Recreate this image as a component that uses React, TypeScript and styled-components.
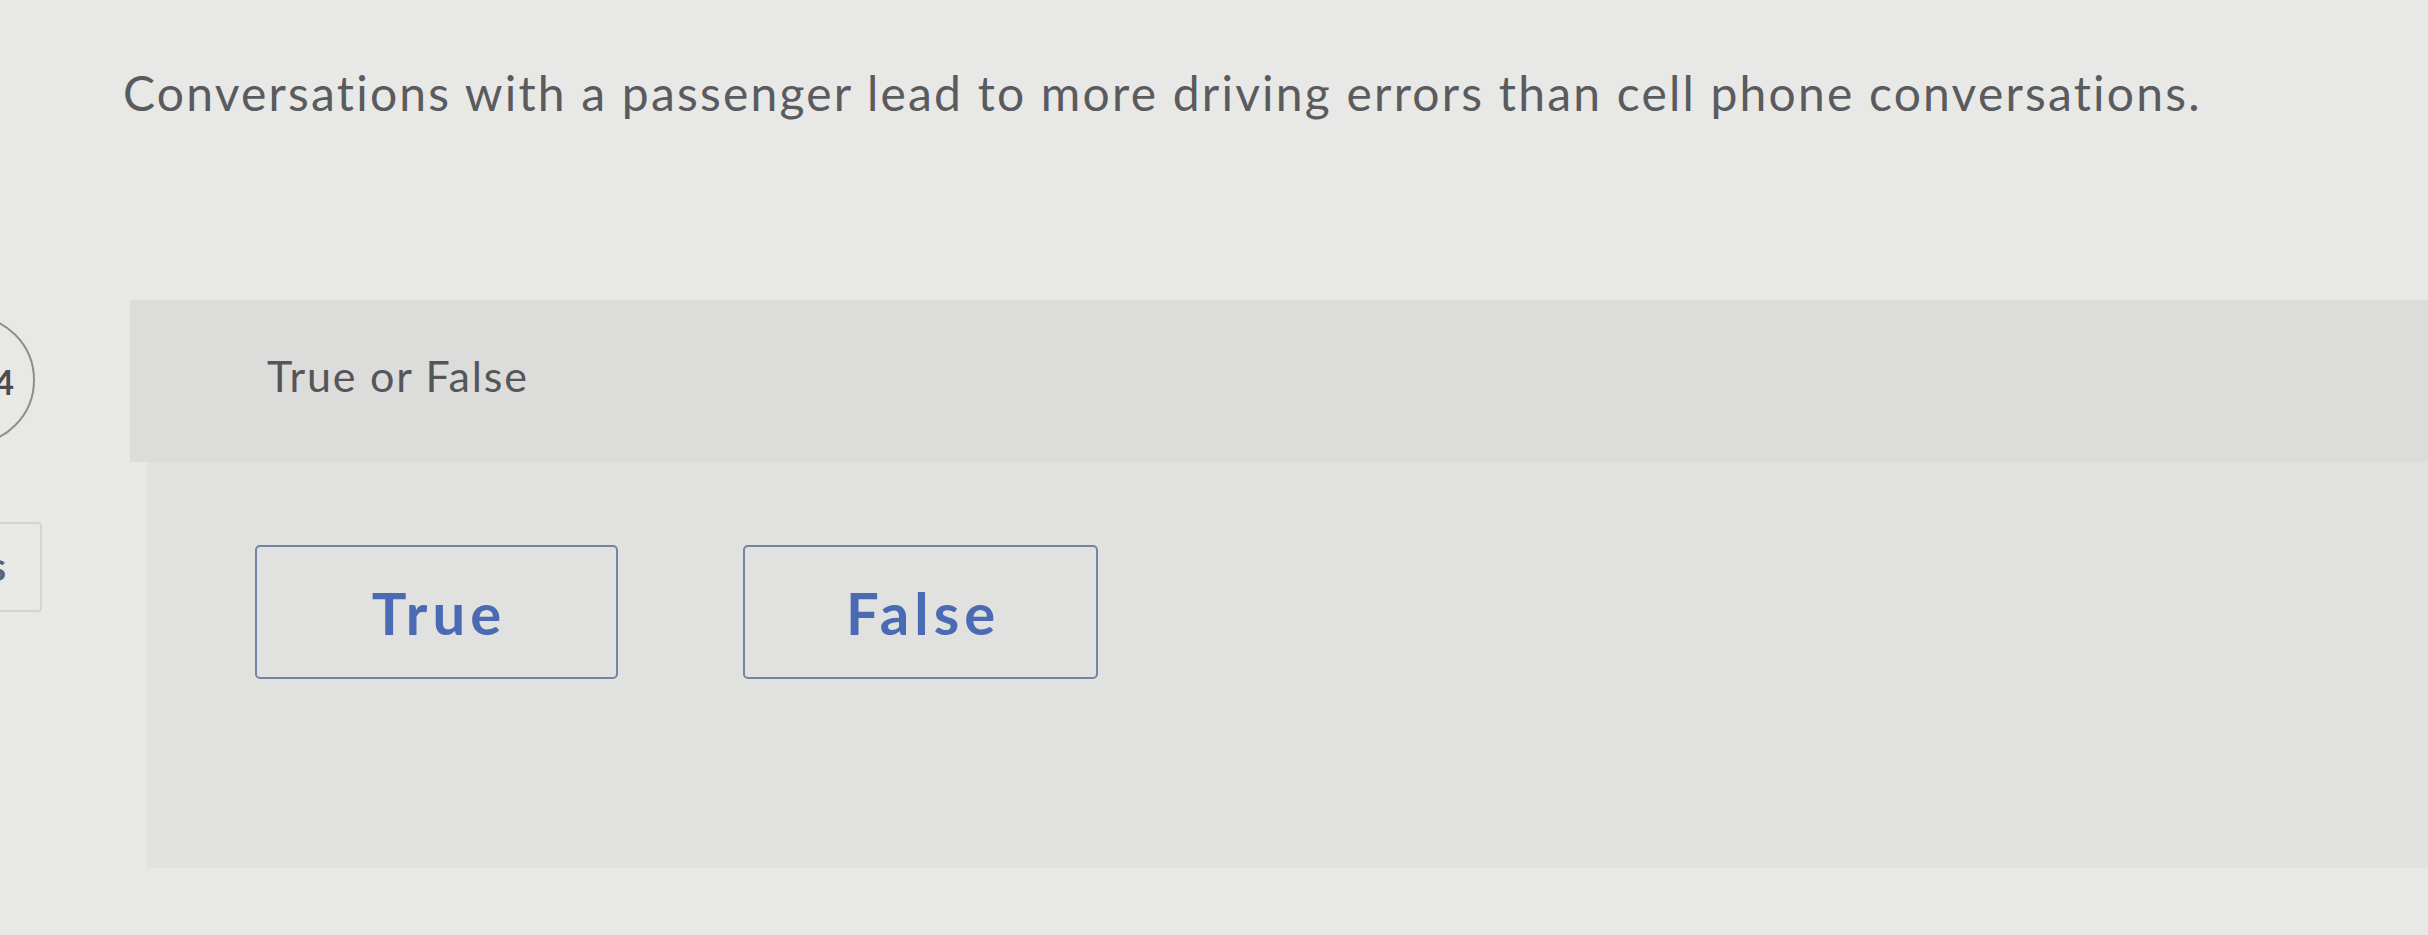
import React from "react";
import styled, { createGlobalStyle } from "styled-components";

const GlobalStyle = createGlobalStyle`
  html, body {
    margin: 0;
    padding: 0;
    background: #e8e8e6;
  }
  body {
    font-family: Lato, "Open Sans", "Liberation Sans", sans-serif;
  }
  * { box-sizing: border-box; }
`;

const Page = styled.div`
  width: 2428px;
  height: 935px;
  overflow: hidden;
  background: #e8e8e6;
  display: flex;
  flex-direction: column;
`;

const Title = styled.h1`
  margin: 0;
  padding: 64px 0 0 123px;
  font-family: Lato, "Liberation Sans", sans-serif;
  font-weight: 400;
  font-size: 48px;
  line-height: 58px;
  letter-spacing: 2.2px;
  color: #5a5b5e;
  white-space: nowrap;
`;

const QuestionRow = styled.section`
  margin-top: 178px;
  display: flex;
  align-items: stretch;
`;

const Rail = styled.div`
  width: 130px;
  flex-shrink: 0;
  overflow: hidden;
  display: flex;
  flex-direction: column;
`;

const NumberBadge = styled.div`
  width: 130px;
  height: 130px;
  margin-top: 15px;
  margin-left: -95px;
  border: 2px solid #8a9284;
  border-radius: 50%;
  display: flex;
  align-items: center;
  justify-content: flex-end;
  padding: 2px 19px 0 0;
  font-family: Lato, "Liberation Sans", sans-serif;
  font-weight: 700;
  font-size: 34px;
  color: #4a4c50;
`;

const SideTab = styled.div`
  width: 60px;
  height: 90px;
  margin-top: 77px;
  margin-left: -18px;
  border: 2px solid #d3d3d1;
  border-left: none;
  border-radius: 0 4px 4px 0;
  display: flex;
  align-items: center;
  justify-content: flex-end;
  padding: 0 34px 2px 0;
  font-family: Lato, "Liberation Sans", sans-serif;
  font-weight: 700;
  font-size: 40px;
  color: #5a6378;
`;

const Panel = styled.div`
  flex: 1;
  display: flex;
  flex-direction: column;
`;

const PromptBand = styled.div`
  height: 162px;
  background: #dcdcda;
  padding: 50px 0 0 137px;
  font-family: Lato, "Liberation Sans", sans-serif;
  font-weight: 400;
  font-size: 43px;
  line-height: 52px;
  letter-spacing: 1.8px;
  color: #55565a;
`;

const AnswerArea = styled.div`
  height: 406px;
  margin-left: 17px;
  background: #e1e1df;
  padding: 83px 0 0 108px;
  display: flex;
  align-items: flex-start;
  gap: 125px;
`;

const ChoiceButton = styled.button<{ $width: number }>`
  width: ${(p) => p.$width}px;
  height: 134px;
  border: 2px solid #7485a4;
  border-radius: 5px;
  background: transparent;
  display: flex;
  align-items: center;
  justify-content: center;
  padding: 0 0 0 5px;
  font-family: Lato, "Liberation Sans", sans-serif;
  font-weight: 700;
  font-size: 58px;
  letter-spacing: 5px;
  color: #4a6bb3;
  cursor: pointer;
`;

export default function App() {
  return (
    <>
      <GlobalStyle />
      <Page>
        <Title>
          Conversations with a passenger lead to more driving errors than cell phone conversations.
        </Title>
        <QuestionRow>
          <Rail>
            <NumberBadge>4</NumberBadge>
            <SideTab>s</SideTab>
          </Rail>
          <Panel>
            <PromptBand>True or False</PromptBand>
            <AnswerArea>
              <ChoiceButton $width={363}>True</ChoiceButton>
              <ChoiceButton $width={355}>False</ChoiceButton>
            </AnswerArea>
          </Panel>
        </QuestionRow>
      </Page>
    </>
  );
}
